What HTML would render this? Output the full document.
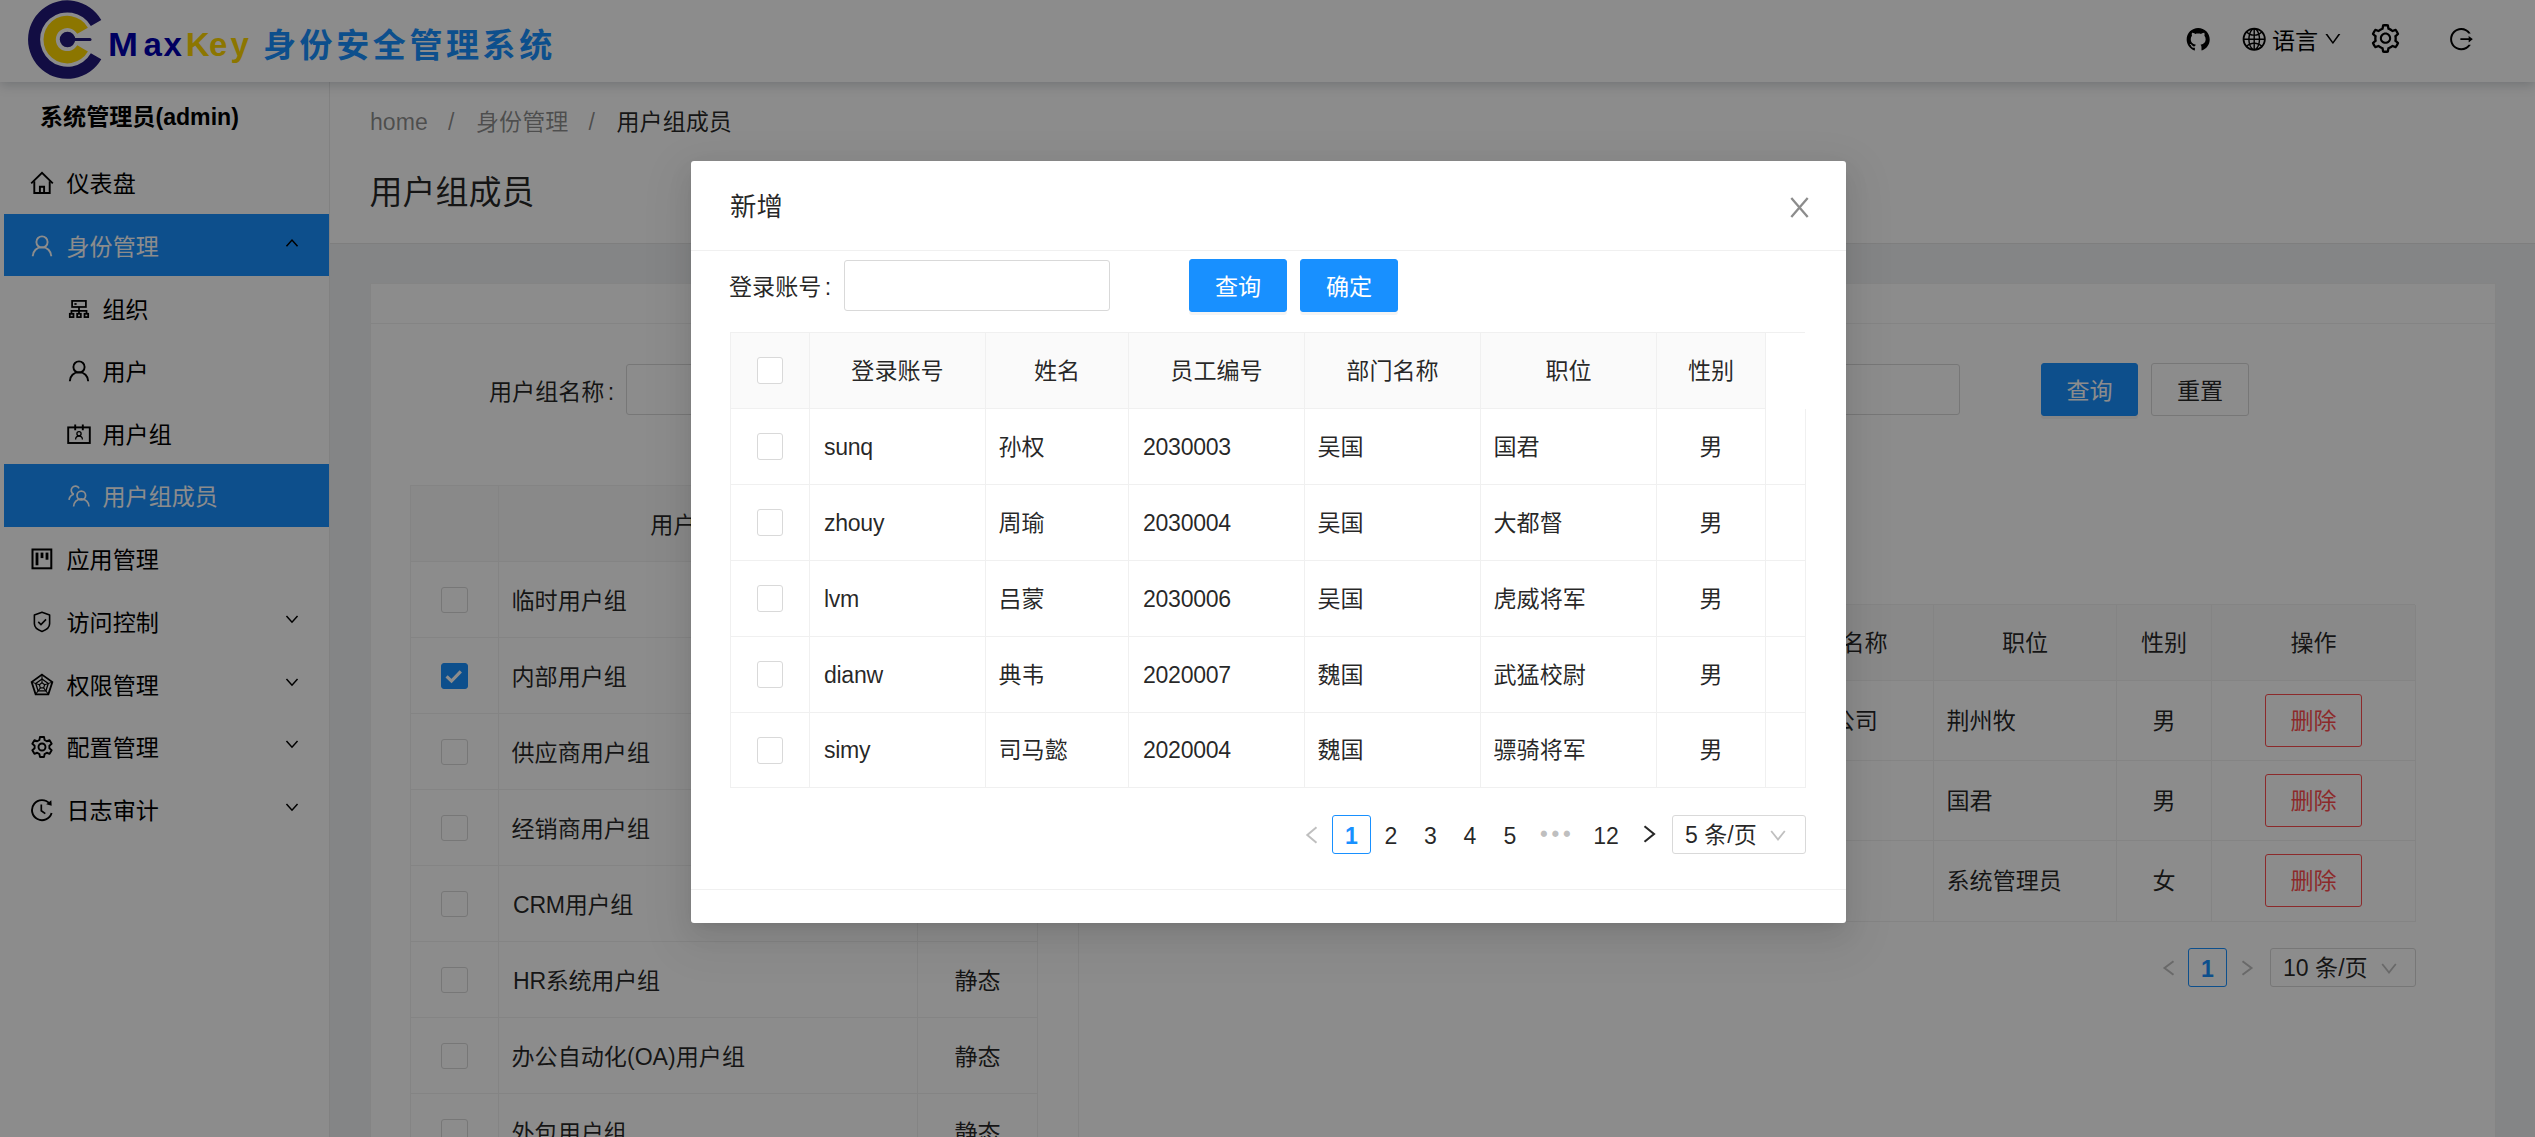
<!DOCTYPE html>
<html lang="zh-CN">
<head>
<meta charset="utf-8">
<title>MaxKey 身份安全管理系统</title>
<style>
*{box-sizing:border-box;margin:0;padding:0}
html,body{width:2535px;height:1137px;overflow:hidden}
body{position:relative;background:#f0f2f5;font-family:"Liberation Sans","Noto Sans CJK SC",sans-serif;font-size:23.1px;color:rgba(0,0,0,.85);line-height:36px}
.abs{position:absolute}
svg{display:block;overflow:visible}
.t{position:absolute;white-space:nowrap;line-height:36px;height:36px}

/* ---------- header ---------- */
#hd{position:absolute;left:0;top:0;width:2535px;height:82px;background:#fff;box-shadow:0 2px 12px rgba(0,21,41,.22);z-index:3}
#brand{position:absolute;left:108px;top:20px;height:50px;line-height:50px;font-size:33px;font-weight:bold;white-space:nowrap}
#brand .mx{color:#0000b0;letter-spacing:3.2px}
#brand .ky{color:#ffd700;letter-spacing:3.2px}
#brand .cn{position:absolute;left:155px;top:1px;color:#1890ff;letter-spacing:3.600px}

/* ---------- sidebar ---------- */
#sd{position:absolute;left:0;top:82px;width:330px;height:1055px;background:#fff;border-right:1px solid #ebebeb;z-index:2}
#sd .usr{position:absolute;left:40px;top:17px;font-weight:bold;font-size:23.1px;line-height:36px;white-space:nowrap;color:#000}
.mi{position:absolute;left:4px;width:325px;height:63px;line-height:63px;white-space:nowrap;color:#000}
.mi.on{background:#1890ff;color:#fff}
.mi .ic{position:absolute;left:25.5px;top:19.500px;width:24px;height:24px}
.mi .tx{position:absolute;left:62.500px;top:1.5px}
.mi.sub .ic{left:62.700px}
.mi.sub .tx{left:98.500px}
.mi .ar{position:absolute;left:281px;top:22.300px;width:14px;height:14px;color:#000}

/* ---------- main ---------- */
#ph{position:absolute;left:330px;top:82px;width:2205px;height:162px;background:#fff;border-bottom:1px solid #e6e6e6}
#card{position:absolute;left:370px;top:283px;width:2126px;height:900px;background:#fff;box-shadow:inset 0 0 0 1px #f0f0f0}
#card .hl{position:absolute;left:0;top:40px;width:100%;height:1px;background:#f0f0f0}
.inp{position:absolute;background:#fff;border:1px solid #d9d9d9;border-radius:3px}
.btn{position:absolute;height:53px;line-height:55px;text-align:center;border:1px solid #d9d9d9;border-radius:3px;background:#fff;white-space:nowrap}
.btn.pr{background:#1890ff;border-color:#1890ff;color:#fff;box-shadow:0 3px 0 rgba(0,0,0,.045)}
.btn.dg{border-color:#ff4d4f;color:#ff4d4f;line-height:53px}
.cb{position:absolute;width:26px;height:27px;border:1px solid #d9d9d9;border-radius:3px;background:#fff}
.cb.ck{background:#1890ff;border-color:#1890ff}

/* tables drawn with absolutely positioned cells */
.tb{position:absolute}
.tb .c{position:absolute;border-right:1px solid #f0f0f0;border-bottom:1px solid #f0f0f0;white-space:nowrap;overflow:hidden}
.tb .c.h{background:#fafafa;text-align:center}
.tb .c span{position:absolute;left:0;right:0;top:50%;margin-top:-18px;line-height:36px;height:36px}
.tb .c.l span{left:14px;text-align:left;letter-spacing:-.3px}
.tb .c.l.k span{left:12.500px;letter-spacing:0}
.colon{margin-left:3.300px}
.tb.lt .c span{margin-top:-16.500px}
.tb.lt .cb{width:27px;height:26px}
.tb .c.m span{text-align:center}

/* pagination */
.pg{position:absolute;height:39px;line-height:42px;text-align:center;white-space:nowrap}
.pg.box{border:1px solid #d9d9d9;border-radius:3px;background:#fff;line-height:39px}
.pg.act{border:1px solid #1890ff;border-radius:3px;color:#1890ff;font-weight:bold;background:#fff;line-height:41px}
.pg.dots{color:rgba(0,0,0,.25);font-size:23.500px;letter-spacing:3.200px;line-height:38px}

/* ---------- mask & modal ---------- */
#mask{position:absolute;left:0;top:0;width:2535px;height:1137px;background:rgba(0,0,0,.45);z-index:10}
#modal{position:absolute;left:691px;top:161px;width:1155px;height:762px;background:#fff;border-radius:3px;z-index:11;box-shadow:0 5px 10px -7px rgba(0,0,0,.12),0 10px 26px rgba(0,0,0,.08),0 15px 46px 13px rgba(0,0,0,.05)}
#modal .mh{position:absolute;left:0;top:0;width:100%;height:90px;border-bottom:1px solid #f0f0f0}
#modal .mf{position:absolute;left:0;top:728px;width:100%;height:34px;border-top:1px solid #f0f0f0}
</style>
</head>
<body>

<svg width="0" height="0" style="position:absolute">
 <defs>
  <symbol id="i-home" viewBox="0 0 24 24"><g fill="none" stroke="currentColor" stroke-width="1.9" stroke-linejoin="miter"><path d="M1.2 12.4L12 1.9l10.800 10.500"/><path d="M4.300 10.200V22h15.400V10.200"/><path d="M9.900 22v-6.300h4.200V22"/></g></symbol>
  <symbol id="i-user" viewBox="0 0 24 24"><g fill="none" stroke="currentColor" stroke-width="1.9"><circle cx="12" cy="8" r="5.600"/><path d="M2.800 22.300a9.200 9.200 0 0 1 18.400 0"/></g></symbol>
  <symbol id="i-cluster" viewBox="0 0 24 24"><g transform="translate(12 12) scale(.92) translate(-12 -12)"><g fill="none" stroke="currentColor" stroke-width="1.900"><rect x="4.500" y="3.200" width="15" height="6.600"/><path d="M12 9.800v4.300M3.800 17.200v-3.100h16.400v3.100M12 14.100v3.100"/><rect x="2" y="17.200" width="4" height="3.600"/><rect x="10" y="17.200" width="4" height="3.600"/><rect x="18" y="17.200" width="4" height="3.600"/></g><rect x="7" y="5.600" width="2.400" height="1.900" fill="currentColor"/></g></symbol>
  <symbol id="i-contacts" viewBox="0 0 24 24"><g fill="none" stroke="currentColor" stroke-width="1.900"><rect x="1.200" y="5.400" width="21.600" height="15.600"/><path d="M8.200 2.600v5.600M15.800 2.600v5.600"/></g><g fill="none" stroke="currentColor" stroke-width="1.300"><circle cx="12" cy="11.800" r="2.100"/><path d="M8.600 17.600a3.400 3.400 0 0 1 6.800 0"/></g></symbol>
  <symbol id="i-team" viewBox="0 0 24 24"><g fill="none" stroke="currentColor" stroke-width="1.700"><circle cx="14.300" cy="11.500" r="4.300"/><path d="M6.600 22.600a7.700 7.700 0 0 1 15.400 0"/><path d="M6.800 10.200a4.200 4.200 0 1 1 5.300-5.900"/><path d="M2 15.800a6.800 6.800 0 0 1 4.800-5.600"/></g></symbol>
  <symbol id="i-project" viewBox="0 0 24 24"><rect x="2.500" y="2.500" width="18.800" height="18.800" fill="none" stroke="currentColor" stroke-width="2"/><g fill="currentColor"><rect x="5.600" y="5.600" width="2.800" height="12.700"/><rect x="10.600" y="5.600" width="2.800" height="5.500"/><rect x="15.600" y="5.600" width="2.800" height="7.100"/></g></symbol>
  <symbol id="i-safety" viewBox="0 0 24 24"><g transform="translate(12 11.7) scale(0.94) translate(-12 -12)"><g fill="none" stroke="currentColor" stroke-width="1.700" stroke-linejoin="round"><path d="M12 1.900L3.900 4.800v9.400c0 3.700 3.600 6.600 8.100 8.200 4.500-1.600 8.100-4.500 8.100-8.200V4.800z"/><path d="M8 12.200l2.900 2.900 5.400-5.600" stroke-linejoin="miter"/></g></g></symbol>
  <symbol id="i-radar" viewBox="0 0 24 24"><g transform="translate(12 11.5) scale(0.95) translate(-12 -12)"><g fill="none" stroke="currentColor" stroke-linejoin="miter"><path d="M12 1.600l10.900 7.900-4.200 12.800H5.300L1.100 9.500z" stroke-width="1.900"/><path d="M12 6.200l6.600 4.800-2.500 7.700H7.900L5.400 11z" stroke-width="1.400"/><path d="M12 10.200l2.800 2-1.100 3.300h-3.400l-1.100-3.300z" stroke-width="1.200"/><path d="M12 1.600v8.600M22.900 9.500l-8.100 2.700M18.700 22.300l-5-6.800M5.300 22.300l5-6.800M1.100 9.500l8.100 2.700" stroke-width="1.100"/></g></g></symbol>
  <symbol id="i-setting" viewBox="0 0 24 24"><g fill="none" stroke="currentColor" stroke-width="1.900" stroke-linejoin="round"><path d="M9.930 1.760h4.140l.5 2.900 2.250 1.300 2.760-1.020 2.070 3.590-2.260 1.880v2.600l2.260 1.880-2.070 3.590-2.760-1.020-2.250 1.300-.5 2.900H9.930l-.5-2.900-2.250-1.300-2.760 1.020-2.070-3.590 2.260-1.880v-2.600L2.350 8.530l2.070-3.590 2.760 1.020 2.250-1.300z" transform="translate(0 0.300)"/><circle cx="12" cy="12" r="3.500"/></g></symbol>
  <symbol id="i-history" viewBox="0 0 24 24"><g fill="none" stroke="currentColor" stroke-width="1.900"><path d="M19.600 5.600A10 10 0 1 0 21.600 15"/><path d="M11.300 6.600v6.200l4 2.800" stroke-width="1.700"/></g><path d="M16.200 6.300l5.500 1.500-.4-5.600z" fill="currentColor"/></symbol>
  <symbol id="i-down" viewBox="0 0 24 24"><path d="M2.500 7l9.500 10.500L21.500 7" fill="none" stroke="currentColor" stroke-width="2.600"/></symbol>
  <symbol id="i-up" viewBox="0 0 24 24"><path d="M2.500 17.500L12 7l9.500 10.500" fill="none" stroke="currentColor" stroke-width="2.600"/></symbol>
  <symbol id="a-github" viewBox="0 0 1024 1024"><path fill="currentColor" d="M511.6 76.3C264.3 76.2 64 276.4 64 523.5 64 718.9 189.3 885 363.8 946c23.500 5.900 19.900-10.800 19.900-22.200v-77.500c-135.700 15.900-141.200-73.900-150.300-88.900C215 726 171.500 718 184.500 703c30.900-15.900 62.400 4 98.900 57.900 26.400 39.100 77.900 32.500 104 26 5.700-23.500 17.900-44.500 34.700-60.800-140.600-25.200-199.200-111-199.200-213 0-49.500 16.300-95 48.300-131.700-20.400-60.500 1.900-112.300 4.900-120 58.100-5.200 118.500 41.600 123.200 45.300 33-8.900 70.700-13.600 112.900-13.600 42.400 0 80.200 4.900 113.500 13.900 11.300-8.600 67.300-48.800 121.300-43.900 2.900 7.700 24.700 58.300 5.500 118 32.400 36.800 48.900 82.700 48.900 132.300 0 102.200-59 188.100-200 212.900a127.500 127.500 0 0138.100 91v112.500c.8 9 0 17.900 15 17.900 177.100-59.700 304.600-227 304.600-424.100 0-247.200-200.400-447.300-447.500-447.300z"/></symbol>
  <symbol id="a-setting" viewBox="0 0 1024 1024"><path fill="currentColor" d="M924.8 625.700l-65.500-56c3.100-19 4.700-38.400 4.700-57.800s-1.600-38.800-4.700-57.800l65.500-56a32.030 32.030 0 009.300-35.200l-.9-2.600a442.090 442.090 0 00-79.700-137.900l-1.800-2.100a32.120 32.120 0 00-35.100-9.500l-81.300 28.900c-30-24.600-63.500-44-99.700-57.600l-15.700-85a32.050 32.050 0 00-25.800-25.700l-2.700-.5c-52.100-9.400-106.900-9.400-159 0l-2.700.5a32.050 32.050 0 00-25.800 25.700l-15.800 85.400a351.860 351.860 0 00-99 57.400l-81.900-29.100a32 32 0 00-35.100 9.500l-1.800 2.100a446.020 446.020 0 00-79.700 137.900l-.9 2.600c-4.500 12.500-.8 26.500 9.300 35.200l66.300 56.600c-3.100 18.800-4.600 38-4.600 57.100 0 19.200 1.500 38.400 4.600 57.100L99 625.500a32.030 32.030 0 00-9.300 35.200l.9 2.600c18.100 50.400 44.900 96.900 79.700 137.900l1.800 2.100a32.120 32.120 0 0035.100 9.500l81.900-29.100c29.800 24.500 63.100 43.900 99 57.400l15.800 85.400a32.050 32.050 0 0025.800 25.700l2.700.5a449.400 449.400 0 00159 0l2.700-.5a32.050 32.050 0 0025.800-25.700l15.700-85a350 350 0 0099.700-57.600l81.300 28.900a32 32 0 0035.100-9.500l1.800-2.100c34.800-41.100 61.600-87.500 79.700-137.900l.9-2.600c4.500-12.300.8-26.300-9.300-35zM788.300 465.900c2.500 15.100 3.800 30.600 3.800 46.100s-1.300 31-3.800 46.100l-6.600 40.100 74.700 63.900a370.030 370.030 0 01-42.600 73.600L721 702.800l-31.400 25.800c-23.900 19.600-50.500 35-79.300 45.800l-38.100 14.300-17.900 97a377.500 377.500 0 01-85 0l-17.900-97.200-37.800-14.500c-28.500-10.800-55-26.200-78.700-45.700l-31.400-25.900-93.400 33.200c-17-22.900-31.200-47.600-42.600-73.600l75.500-64.500-6.500-40c-2.400-14.900-3.700-30.300-3.700-45.500 0-15.300 1.200-30.600 3.700-45.500l6.500-40-75.500-64.500c11.300-26.100 25.600-50.700 42.600-73.600l93.400 33.200 31.400-25.900c23.700-19.500 50.200-34.900 78.700-45.700l37.900-14.300 17.900-97.200c28.100-3.200 56.800-3.200 85 0l17.900 97 38.100 14.300c28.700 10.800 55.400 26.200 79.300 45.800l31.400 25.800 92.800-32.900c17 22.900 31.200 47.600 42.600 73.600L781.800 426l6.500 39.900zM512 326c-97.200 0-176 78.800-176 176s78.800 176 176 176 176-78.800 176-176-78.800-176-176-176zm79.200 255.200A111.600 111.600 0 01512 614c-29.900 0-58-11.700-79.200-32.800A111.600 111.600 0 01400 502c0-29.900 11.700-58 32.800-79.200C454 401.600 482.100 390 512 390c29.900 0 58 11.600 79.200 32.800A111.600 111.600 0 01624 502c0 29.900-11.700 58-32.800 79.200z"/></symbol>
  <symbol id="a-logout" viewBox="0 0 1024 1024"><path fill="currentColor" d="M868 732h-70.300c-4.800 0-9.300 2.100-12.300 5.800-7 8.500-14.500 16.700-22.400 24.500a353.840 353.840 0 01-112.700 75.900A352.800 352.800 0 01512.400 866c-47.900 0-94.300-9.400-137.900-27.800a353.840 353.840 0 01-112.700-75.900 353.280 353.280 0 01-76-112.500C167.300 606.200 158 559.900 158 512s9.400-94.200 27.800-137.800c17.800-42.100 43.400-80 76-112.500s70.500-58.100 112.700-75.900c43.600-18.400 90-27.800 137.900-27.800 47.900 0 94.300 9.300 137.900 27.800 42.200 17.800 80.100 43.400 112.700 75.900 7.900 7.900 15.300 16.100 22.400 24.500 3 3.700 7.600 5.800 12.300 5.800H868c6.300 0 10.200-7 6.700-12.300C798 160.500 663.800 81.600 511.300 82 271.700 82.600 79.600 277.100 82 516.400 84.400 751.900 276.200 942 512.400 942c152.100 0 285.700-78.800 362.300-197.700 3.400-5.300-.4-12.300-6.700-12.300zm88.900-226.300L815 393.700c-5.300-4.200-13-.4-13 6.300v76H488c-4.400 0-8 3.600-8 8v56c0 4.400 3.600 8 8 8h314v76c0 6.700 7.800 10.500 13 6.300l141.900-112a8 8 0 000-12.600z"/></symbol>
  <symbol id="a-global" viewBox="0 0 1024 1024"><path fill="currentColor" d="M854.400 800.900c.2-.3.5-.6.7-.9C920.600 722.100 960 621.700 960 512s-39.400-210.100-104.800-288c-.2-.3-.5-.5-.7-.8-1.100-1.300-2.100-2.500-3.200-3.700-.4-.5-.8-.9-1.200-1.400l-4.100-4.700-.1-.1c-1.500-1.700-3.100-3.400-4.600-5.100l-.1-.1c-3.200-3.400-6.400-6.800-9.700-10.100l-.1-.1-4.800-4.800-.3-.3c-1.500-1.500-3-2.900-4.500-4.300-.5-.5-1-1-1.600-1.500-1-1-2-1.900-3-2.800-.3-.3-.7-.6-1-1C736.400 109.200 629.500 64 512 64s-224.400 45.200-304.300 119.200c-.3.300-.7.600-1 1-1 .9-2 1.900-3 2.900-.5.5-1 1-1.600 1.500-1.500 1.400-3 2.900-4.500 4.300l-.3.300-4.800 4.800-.1.100c-3.300 3.300-6.500 6.700-9.700 10.100l-.1.100c-1.600 1.700-3.100 3.400-4.600 5.100l-.1.100c-1.400 1.500-2.800 3.100-4.100 4.700-.4.500-.8.900-1.200 1.400-1.100 1.200-2.100 2.500-3.200 3.700-.2.300-.5.500-.7.800C103.400 301.900 64 402.300 64 512s39.400 210.100 104.800 288c.2.300.5.600.7.900l3.100 3.700c.4.500.8.900 1.200 1.400l4.100 4.700c0 .1.100.1.100.2 1.500 1.700 3 3.400 4.600 5l.1.100c3.200 3.400 6.400 6.800 9.600 10.100l.1.100c1.600 1.600 3.100 3.200 4.700 4.700l.3.300c3.300 3.300 6.700 6.500 10.100 9.600 80.100 74 187 119.200 304.500 119.200s224.400-45.200 304.300-119.200a300 300 0 0010-9.600l.3-.3c1.600-1.600 3.200-3.100 4.700-4.700l.1-.1c3.300-3.300 6.500-6.700 9.600-10.100l.1-.1c1.500-1.700 3.100-3.300 4.600-5 0-.1.100-.1.100-.2 1.400-1.500 2.800-3.100 4.100-4.700.4-.5.800-.9 1.200-1.400a99 99 0 003.300-3.700zm4.100-142.600c-13.800 32.600-32 62.800-54.200 90.200a444.070 444.070 0 00-81.500-55.900c11.600-46.900 18.800-98.400 20.700-152.600H887c-3 40.900-12.600 80.600-28.500 118.300zM887 484H743.500c-1.900-54.200-9.100-105.700-20.700-152.600 29.300-15.600 56.600-34.400 81.500-55.900A373.860 373.860 0 01887 484zM658.300 165.500c39.700 16.800 75.800 40 107.600 69.200a394.720 394.720 0 01-59.400 41.800c-15.700-45-35.800-84.100-59.200-115.400 3.700 1.400 7.400 2.900 11 4.400zm-90.600 700.600c-9.200 7.200-18.400 12.700-27.700 16.400V697a389.100 389.100 0 01115.700 26.200c-8.300 24.600-17.900 47.300-29 67.800-17.400 32.400-37.800 58.300-59 75.100zm59-633.100c11 20.600 20.700 43.300 29 67.800A389.100 389.100 0 01540 327V141.600c9.200 3.700 18.500 9.100 27.700 16.400 21.200 16.700 41.600 42.600 59 75zM540 640.900V540h147.500c-1.600 44.200-7.100 87.100-16.300 127.800l-.3 1.200A445.020 445.020 0 00540 640.900zm0-156.900V383.100c45.800-2.800 89.800-12.500 130.900-28.100l.3 1.200c9.200 40.700 14.700 83.500 16.300 127.800H540zm-56 56v100.900c-45.800 2.800-89.800 12.500-130.900 28.100l-.3-1.200c-9.200-40.700-14.700-83.500-16.300-127.800H484zm-147.500-56c1.600-44.200 7.100-87.100 16.300-127.800l.3-1.200c41.100 15.600 85 25.300 130.900 28.100V484H336.500zM484 697v185.400c-9.200-3.700-18.500-9.100-27.700-16.400-21.200-16.700-41.700-42.700-59.100-75.100-11-20.600-20.700-43.300-29-67.800 37.200-14.600 75.900-23.300 115.800-26.100zm0-370a389.100 389.100 0 01-115.700-26.200c8.300-24.600 17.900-47.300 29-67.800 17.400-32.400 37.800-58.400 59.100-75.100 9.200-7.200 18.400-12.700 27.700-16.400V327zM365.700 165.500c3.700-1.500 7.300-3 11-4.400-23.400 31.300-43.500 70.400-59.200 115.400-21-12-40.900-26-59.400-41.800 31.800-29.200 67.900-52.400 107.600-69.200zM165.500 365.700c13.800-32.600 32-62.800 54.200-90.200 24.900 21.500 52.200 40.300 81.500 55.900-11.600 46.900-18.800 98.400-20.700 152.600H137c3-40.900 12.600-80.600 28.500-118.300zM137 540h143.500c1.900 54.200 9.100 105.700 20.700 152.600a444.070 444.070 0 00-81.500 55.900A373.860 373.860 0 01137 540zm228.700 318.500c-39.700-16.800-75.800-40-107.600-69.200 18.500-15.800 38.400-29.700 59.400-41.800 15.700 45 35.800 84.100 59.200 115.400-3.700-1.400-7.400-2.900-11-4.400zm292.600 0c-3.700 1.500-7.300 3-11 4.400 23.400-31.300 43.500-70.400 59.200-115.400 21 12 40.900 26 59.400 41.800a373.810 373.810 0 01-107.600 69.200z"/></symbol>
  <symbol id="a-down" viewBox="0 0 1024 1024"><path fill="currentColor" d="M884 256h-75c-5.100 0-9.900 2.500-12.900 6.600L512 654.200 227.900 262.600c-3-4.100-7.800-6.600-12.900-6.600h-75c-6.500 0-10.300 7.400-6.500 12.700l352.600 486.100c12.800 17.600 39 17.600 51.700 0l352.600-486.100c3.900-5.300.1-12.700-6.400-12.700z"/></symbol>
 </defs>
</svg>

<!-- ================= HEADER ================= -->
<div id="hd">
  <svg class="abs" style="left:26px;top:0" width="78" height="80" viewBox="0 0 78 80">
    <path d="M75.290 19.980A39.250 39.250 0 1 0 75.290 59.220L64.860 53.200A27.200 27.200 0 1 1 64.860 26Z" fill="#21197a"/>
    <path d="M61.910 27.700A23.800 23.800 0 1 0 61.910 51.500L51.260 45.350A11.500 11.500 0 1 1 51.260 33.850Z" fill="#ffd700"/>
    <circle cx="41.500" cy="39.600" r="7.750" fill="#21197a"/>
    <rect x="45" y="38.100" width="20.500" height="3" rx="1.500" fill="#21197a"/>
  </svg>
  <div id="brand"><span class="mx"><span style="display:inline-block;transform:scaleX(1.09);transform-origin:0 50%">M</span><span style="position:relative;left:4.800px">a</span><span style="position:relative;left:3.200px">x</span></span><span class="ky"><span style="position:relative;left:3.800px">K</span>ey</span><span class="cn">身份安全管理系统</span></div>
  <svg class="abs" style="left:2185px;top:26.400px;color:#000" width="26.400" height="26.400"><use href="#a-github"/></svg>
  <svg class="abs" style="left:2241.300px;top:26.300px;color:#000" width="26.400" height="26.400"><use href="#a-global"/></svg>
  <div class="t" style="left:2272px;top:22.500px;color:#000">语言</div>
  <svg class="abs" style="left:2323.300px;top:29.400px;color:#000" width="19.800" height="19.800"><use href="#a-down"/></svg>
  <svg class="abs" style="left:2369.100px;top:22.300px;color:#000" width="33" height="33"><use href="#a-setting"/></svg>
  <svg class="abs" style="left:2448.100px;top:26.250px;color:#000" width="26.400" height="26.400"><use href="#a-logout"/></svg>
</div>

<!-- ================= SIDEBAR ================= -->
<div id="sd">
  <div class="usr">系统管理员(admin)</div>
  <div class="mi " style="top:69px;height:63px;line-height:63px"><svg class="ic"><use href="#i-home"/></svg><span class="tx">仪表盘</span></div>
  <div class="mi on" style="top:132px;height:62px;line-height:62px"><svg class="ic"><use href="#i-user"/></svg><span class="tx">身份管理</span><svg class="ar"><use href="#i-up"/></svg></div>
  <div class="mi sub" style="top:195px;height:63px;line-height:63px"><svg class="ic"><use href="#i-cluster"/></svg><span class="tx">组织</span></div>
  <div class="mi sub" style="top:257px;height:63px;line-height:63px"><svg class="ic"><use href="#i-user"/></svg><span class="tx">用户</span></div>
  <div class="mi sub" style="top:320px;height:63px;line-height:63px"><svg class="ic"><use href="#i-contacts"/></svg><span class="tx">用户组</span></div>
  <div class="mi on sub" style="top:382px;height:63px;line-height:63px"><svg class="ic"><use href="#i-team"/></svg><span class="tx">用户组成员</span></div>
  <div class="mi " style="top:445px;height:63px;line-height:63px"><svg class="ic"><use href="#i-project"/></svg><span class="tx">应用管理</span></div>
  <div class="mi " style="top:508px;height:63px;line-height:63px"><svg class="ic"><use href="#i-safety"/></svg><span class="tx">访问控制</span><svg class="ar"><use href="#i-down"/></svg></div>
  <div class="mi " style="top:571px;height:63px;line-height:63px"><svg class="ic"><use href="#i-radar"/></svg><span class="tx">权限管理</span><svg class="ar"><use href="#i-down"/></svg></div>
  <div class="mi " style="top:633px;height:63px;line-height:63px"><svg class="ic"><use href="#i-setting"/></svg><span class="tx">配置管理</span><svg class="ar"><use href="#i-down"/></svg></div>
  <div class="mi " style="top:696px;height:63px;line-height:63px"><svg class="ic"><use href="#i-history"/></svg><span class="tx">日志审计</span><svg class="ar"><use href="#i-down"/></svg></div>
</div>

<!-- ================= MAIN ================= -->
<div id="ph">
 <div class="t" style="left:40px;top:21.5px;color:rgba(0,0,0,.45)">home</div>
 <div class="t" style="left:118px;top:21.5px;color:rgba(0,0,0,.45)">/</div>
 <div class="t" style="left:146px;top:21.5px;color:rgba(0,0,0,.45)">身份管理</div>
 <div class="t" style="left:258.500px;top:21.5px;color:rgba(0,0,0,.45)">/</div>
 <div class="t" style="left:286.500px;top:21.5px">用户组成员</div>
 <div class="t" style="left:39.500px;top:86px;font-size:33px;line-height:50px;height:50px">用户组成员</div>
</div>
<div id="card"><div class="hl"></div>
 <div class="t" style="left:119px;top:91px">用户组名称<span class="colon">:</span></div>
 <div class="inp" style="left:256px;top:81px;width:300px;height:51px"></div>
 <div class="inp" style="left:1130px;top:81px;width:460px;height:51px"></div>
 <div class="btn pr" style="left:1671px;top:80px;width:97px">查询</div>
 <div class="btn" style="left:1781px;top:80px;width:98px">重置</div>
 <div class="abs" style="left:708px;top:162px;width:1px;height:800px;background:#f0f0f0"></div>
 <div class="tb lt" style="left:40px;top:202px;width:627px;height:700px;border-left:1px solid #f0f0f0;border-top:1px solid #f0f0f0">
  <div class="c h" style="left:0px;top:0px;width:88px;height:76px"></div>
  <div class="c h" style="left:88px;top:0px;width:419px;height:76px"><span>用户组名称</span></div>
  <div class="c h" style="left:507px;top:0px;width:120px;height:76px"><span>类型</span></div>
  <div class="c " style="left:0px;top:76px;width:88px;height:76px"><div class="cb" style="left:30px;top:25px"></div></div>
  <div class="c l k" style="left:88px;top:76px;width:419px;height:76px"><span>临时用户组</span></div>
  <div class="c m" style="left:507px;top:76px;width:120px;height:76px"><span>静态</span></div>
  <div class="c " style="left:0px;top:152px;width:88px;height:76px"><div class="cb ck" style="left:30px;top:25px"><svg width="26" height="26" viewBox="0 0 26 26" style="position:absolute;left:-1px;top:-1px"><path d="M5.600 13.400l4.900 4.700 9.300-9.700" fill="none" stroke="#fff" stroke-width="3.200"/></svg></div></div>
  <div class="c l k" style="left:88px;top:152px;width:419px;height:76px"><span>内部用户组</span></div>
  <div class="c m" style="left:507px;top:152px;width:120px;height:76px"><span>静态</span></div>
  <div class="c " style="left:0px;top:228px;width:88px;height:76px"><div class="cb" style="left:30px;top:25px"></div></div>
  <div class="c l k" style="left:88px;top:228px;width:419px;height:76px"><span>供应商用户组</span></div>
  <div class="c m" style="left:507px;top:228px;width:120px;height:76px"><span>静态</span></div>
  <div class="c " style="left:0px;top:304px;width:88px;height:76px"><div class="cb" style="left:30px;top:25px"></div></div>
  <div class="c l k" style="left:88px;top:304px;width:419px;height:76px"><span>经销商用户组</span></div>
  <div class="c m" style="left:507px;top:304px;width:120px;height:76px"><span>静态</span></div>
  <div class="c " style="left:0px;top:380px;width:88px;height:76px"><div class="cb" style="left:30px;top:25px"></div></div>
  <div class="c l" style="left:88px;top:380px;width:419px;height:76px"><span>CRM用户组</span></div>
  <div class="c m" style="left:507px;top:380px;width:120px;height:76px"><span>静态</span></div>
  <div class="c " style="left:0px;top:456px;width:88px;height:76px"><div class="cb" style="left:30px;top:25px"></div></div>
  <div class="c l" style="left:88px;top:456px;width:419px;height:76px"><span>HR系统用户组</span></div>
  <div class="c m" style="left:507px;top:456px;width:120px;height:76px"><span>静态</span></div>
  <div class="c " style="left:0px;top:532px;width:88px;height:76px"><div class="cb" style="left:30px;top:25px"></div></div>
  <div class="c l k" style="left:88px;top:532px;width:419px;height:76px"><span>办公自动化(OA)用户组</span></div>
  <div class="c m" style="left:507px;top:532px;width:120px;height:76px"><span>静态</span></div>
  <div class="c " style="left:0px;top:608px;width:88px;height:76px"><div class="cb" style="left:30px;top:25px"></div></div>
  <div class="c l k" style="left:88px;top:608px;width:419px;height:76px"><span>外包用户组</span></div>
  <div class="c m" style="left:507px;top:608px;width:120px;height:76px"><span>静态</span></div>
 </div>
 <div class="tb" style="left:750px;top:321px;width:1295px;height:317px;border-left:1px solid #f0f0f0;border-top:1px solid #f0f0f0">
  <div class="c h" style="left:0px;top:0px;width:170px;height:76px"><span>用户组</span></div>
  <div class="c h" style="left:170px;top:0px;width:140px;height:76px"><span>登录账号</span></div>
  <div class="c h" style="left:310px;top:0px;width:160px;height:76px"><span>姓名</span></div>
  <div class="c h" style="left:470px;top:0px;width:159px;height:76px"><span>员工编号</span></div>
  <div class="c h" style="left:629px;top:0px;width:184px;height:76px"><span>部门名称</span></div>
  <div class="c h" style="left:813px;top:0px;width:183px;height:76px"><span>职位</span></div>
  <div class="c h" style="left:996px;top:0px;width:95px;height:76px"><span>性别</span></div>
  <div class="c h" style="left:1091px;top:0px;width:204px;height:76px"><span>操作</span></div>
  <div class="c l k" style="left:0px;top:76px;width:170px;height:80px"><span>内部用户组</span></div>
  <div class="c l" style="left:170px;top:76px;width:140px;height:80px"><span>liub</span></div>
  <div class="c l k" style="left:310px;top:76px;width:160px;height:80px"><span>刘表</span></div>
  <div class="c l" style="left:470px;top:76px;width:159px;height:80px"><span>2010001</span></div>
  <div class="c l k" style="left:629px;top:76px;width:184px;height:80px"><span>荆州分公司</span></div>
  <div class="c l k" style="left:813px;top:76px;width:183px;height:80px"><span>荆州牧</span></div>
  <div class="c m" style="left:996px;top:76px;width:95px;height:80px"><span>男</span></div>
  <div class="c " style="left:1091px;top:76px;width:204px;height:80px"><div class="btn dg" style="left:53px;top:13px;width:97px">删除</div></div>
  <div class="c l k" style="left:0px;top:156px;width:170px;height:80px"><span>内部用户组</span></div>
  <div class="c l" style="left:170px;top:156px;width:140px;height:80px"><span>sunq</span></div>
  <div class="c l k" style="left:310px;top:156px;width:160px;height:80px"><span>孙权</span></div>
  <div class="c l" style="left:470px;top:156px;width:159px;height:80px"><span>2030003</span></div>
  <div class="c l k" style="left:629px;top:156px;width:184px;height:80px"><span>吴国</span></div>
  <div class="c l k" style="left:813px;top:156px;width:183px;height:80px"><span>国君</span></div>
  <div class="c m" style="left:996px;top:156px;width:95px;height:80px"><span>男</span></div>
  <div class="c " style="left:1091px;top:156px;width:204px;height:80px"><div class="btn dg" style="left:53px;top:13px;width:97px">删除</div></div>
  <div class="c l k" style="left:0px;top:236px;width:170px;height:81px"><span>内部用户组</span></div>
  <div class="c l" style="left:170px;top:236px;width:140px;height:81px"><span>admin</span></div>
  <div class="c l k" style="left:310px;top:236px;width:160px;height:81px"><span>系统管理员</span></div>
  <div class="c l" style="left:470px;top:236px;width:159px;height:81px"><span>1000001</span></div>
  <div class="c l k" style="left:629px;top:236px;width:184px;height:81px"><span>总部</span></div>
  <div class="c l k" style="left:813px;top:236px;width:183px;height:81px"><span>系统管理员</span></div>
  <div class="c m" style="left:996px;top:236px;width:95px;height:81px"><span>女</span></div>
  <div class="c " style="left:1091px;top:236px;width:204px;height:81px"><div class="btn dg" style="left:53px;top:13px;width:97px">删除</div></div>
 </div>
 <svg class="abs" style="left:1791.5px;top:677px" width="14" height="16" viewBox="0 0 14 16"><path d="M11.500 1.200L2.500 8l9 6.800" fill="none" stroke="rgba(0,0,0,.25)" stroke-width="2"/></svg>
 <div class="pg act" style="left:1818px;top:665px;width:39px">1</div>
 <svg class="abs" style="left:1870px;top:677px" width="14" height="16" viewBox="0 0 14 16"><path d="M2.500 1.200l9 6.800-9 6.800" fill="none" stroke="rgba(0,0,0,.25)" stroke-width="2"/></svg>
 <div class="pg box" style="left:1900px;top:665px;width:146px;text-align:left;padding-left:12px">10 条/页<svg class="abs" style="right:18px;top:12px" width="16" height="14" viewBox="0 0 16 14"><path d="M1.200 3l6.800 8.500L14.800 3" fill="none" stroke="rgba(0,0,0,.25)" stroke-width="1.800"/></svg></div>
</div>

<!-- ================= MASK + MODAL ================= -->
<div id="mask"></div>
<div id="modal">
 <div class="mh"><div class="t" style="left:39px;top:28px;font-size:26.400px;line-height:36px">新增</div>
  <svg class="abs" style="left:1099px;top:36px" width="19" height="21" viewBox="0 0 19 21"><path d="M1.300 1l16.400 19M17.700 1L1.300 20" fill="none" stroke="rgba(0,0,0,.45)" stroke-width="2.300"/></svg>
 </div>
 <div class="t" style="left:38px;top:108px">登录账号<span class="colon">:</span></div>
 <div class="inp" style="left:153px;top:99px;width:266px;height:51px"></div>
 <div class="btn pr" style="left:498px;top:98px;width:98px">查询</div>
 <div class="btn pr" style="left:609px;top:98px;width:98px">确定</div>
 <div class="tb" style="left:39px;top:171px;width:1075px;height:456px;border-left:1px solid #f0f0f0;border-top:1px solid #f0f0f0">
  <div class="c h" style="left:0px;top:0px;width:79px;height:76px;"><div class="cb" style="left:26px;top:24px"></div></div>
  <div class="c h" style="left:79px;top:0px;width:176px;height:76px;"><span>登录账号</span></div>
  <div class="c h" style="left:255px;top:0px;width:143px;height:76px;"><span>姓名</span></div>
  <div class="c h" style="left:398px;top:0px;width:176px;height:76px;"><span>员工编号</span></div>
  <div class="c h" style="left:574px;top:0px;width:176px;height:76px;"><span>部门名称</span></div>
  <div class="c h" style="left:750px;top:0px;width:176px;height:76px;"><span>职位</span></div>
  <div class="c h" style="left:926px;top:0px;width:109px;height:76px;"><span>性别</span></div>
  <div class="c " style="left:0px;top:76px;width:79px;height:76px;"><div class="cb" style="left:26px;top:24px"></div></div>
  <div class="c l" style="left:79px;top:76px;width:176px;height:76px;"><span>sunq</span></div>
  <div class="c l k" style="left:255px;top:76px;width:143px;height:76px;"><span>孙权</span></div>
  <div class="c l" style="left:398px;top:76px;width:176px;height:76px;"><span>2030003</span></div>
  <div class="c l k" style="left:574px;top:76px;width:176px;height:76px;"><span>吴国</span></div>
  <div class="c l k" style="left:750px;top:76px;width:176px;height:76px;"><span>国君</span></div>
  <div class="c m" style="left:926px;top:76px;width:109px;height:76px;"><span>男</span></div>
  <div class="c " style="left:1035px;top:76px;width:40px;height:76px;"></div>
  <div class="c " style="left:0px;top:152px;width:79px;height:76px;"><div class="cb" style="left:26px;top:24px"></div></div>
  <div class="c l" style="left:79px;top:152px;width:176px;height:76px;"><span>zhouy</span></div>
  <div class="c l k" style="left:255px;top:152px;width:143px;height:76px;"><span>周瑜</span></div>
  <div class="c l" style="left:398px;top:152px;width:176px;height:76px;"><span>2030004</span></div>
  <div class="c l k" style="left:574px;top:152px;width:176px;height:76px;"><span>吴国</span></div>
  <div class="c l k" style="left:750px;top:152px;width:176px;height:76px;"><span>大都督</span></div>
  <div class="c m" style="left:926px;top:152px;width:109px;height:76px;"><span>男</span></div>
  <div class="c " style="left:1035px;top:152px;width:40px;height:76px;"></div>
  <div class="c " style="left:0px;top:228px;width:79px;height:76px;"><div class="cb" style="left:26px;top:24px"></div></div>
  <div class="c l" style="left:79px;top:228px;width:176px;height:76px;"><span>lvm</span></div>
  <div class="c l k" style="left:255px;top:228px;width:143px;height:76px;"><span>吕蒙</span></div>
  <div class="c l" style="left:398px;top:228px;width:176px;height:76px;"><span>2030006</span></div>
  <div class="c l k" style="left:574px;top:228px;width:176px;height:76px;"><span>吴国</span></div>
  <div class="c l k" style="left:750px;top:228px;width:176px;height:76px;"><span>虎威将军</span></div>
  <div class="c m" style="left:926px;top:228px;width:109px;height:76px;"><span>男</span></div>
  <div class="c " style="left:1035px;top:228px;width:40px;height:76px;"></div>
  <div class="c " style="left:0px;top:304px;width:79px;height:76px;"><div class="cb" style="left:26px;top:24px"></div></div>
  <div class="c l" style="left:79px;top:304px;width:176px;height:76px;"><span>dianw</span></div>
  <div class="c l k" style="left:255px;top:304px;width:143px;height:76px;"><span>典韦</span></div>
  <div class="c l" style="left:398px;top:304px;width:176px;height:76px;"><span>2020007</span></div>
  <div class="c l k" style="left:574px;top:304px;width:176px;height:76px;"><span>魏国</span></div>
  <div class="c l k" style="left:750px;top:304px;width:176px;height:76px;"><span>武猛校尉</span></div>
  <div class="c m" style="left:926px;top:304px;width:109px;height:76px;"><span>男</span></div>
  <div class="c " style="left:1035px;top:304px;width:40px;height:76px;"></div>
  <div class="c " style="left:0px;top:380px;width:79px;height:75px;"><div class="cb" style="left:26px;top:24px"></div></div>
  <div class="c l" style="left:79px;top:380px;width:176px;height:75px;"><span>simy</span></div>
  <div class="c l k" style="left:255px;top:380px;width:143px;height:75px;"><span>司马懿</span></div>
  <div class="c l" style="left:398px;top:380px;width:176px;height:75px;"><span>2020004</span></div>
  <div class="c l k" style="left:574px;top:380px;width:176px;height:75px;"><span>魏国</span></div>
  <div class="c l k" style="left:750px;top:380px;width:176px;height:75px;"><span>骠骑将军</span></div>
  <div class="c m" style="left:926px;top:380px;width:109px;height:75px;"><span>男</span></div>
  <div class="c " style="left:1035px;top:380px;width:40px;height:75px;"></div>
 </div>
 <svg class="abs" style="left:613.5px;top:664.5px" width="14" height="18" viewBox="0 0 14 18"><path d="M11.500 1.200L2.300 9l9.200 7.800" fill="none" stroke="rgba(0,0,0,.25)" stroke-width="2"/></svg>
 <div class="pg act" style="left:641px;top:654px;width:39px">1</div>
 <div class="pg" style="left:680.5px;top:654px;width:39px">2</div>
 <div class="pg" style="left:720.0px;top:654px;width:39px">3</div>
 <div class="pg" style="left:759.5px;top:654px;width:39px">4</div>
 <div class="pg" style="left:799.5px;top:654px;width:39px">5</div>
 <div class="pg dots" style="left:841px;top:654px;width:50px">•••</div>
 <div class="pg" style="left:890px;top:654px;width:50px">12</div>
 <svg class="abs" style="left:951px;top:664px" width="14" height="18" viewBox="0 0 14 18"><path d="M2.500 1.200l9.500 7.800-9.500 7.800" fill="none" stroke="rgba(0,0,0,.85)" stroke-width="2.100"/></svg>
 <div class="pg box" style="left:981px;top:654px;width:134px;text-align:left;padding-left:12px">5 条/页<svg class="abs" style="right:19px;top:12px" width="16" height="14" viewBox="0 0 16 14"><path d="M1.200 3l6.800 8.500L14.800 3" fill="none" stroke="rgba(0,0,0,.25)" stroke-width="1.800"/></svg></div>
 <div class="mf"></div>
</div>

</body>
</html>
